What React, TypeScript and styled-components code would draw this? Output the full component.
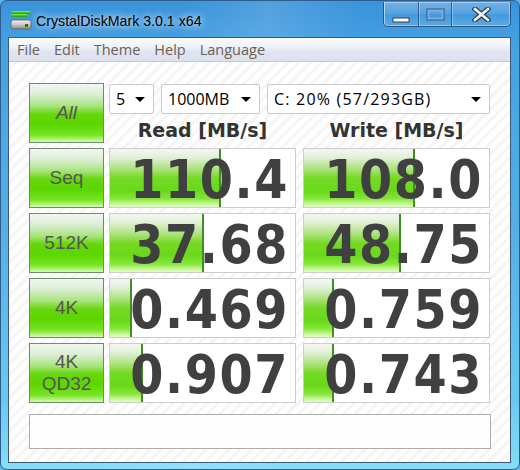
import React from 'react';
import styled, { createGlobalStyle } from 'styled-components';

const Global = createGlobalStyle`
  html, body { margin: 0; padding: 0; width: 520px; height: 470px; overflow: hidden; background: #5fb2e6; }
  #root { width: 520px; height: 470px; }
  * { box-sizing: border-box; }
`;

const Window = styled.div`
  width: 520px;
  height: 470px;
  display: flex;
  flex-direction: column;
  padding: 0 8px 6px 7px;
  border: 1px solid #2c5d8c;
  border-radius: 7px;
  background:
    linear-gradient(100deg, rgba(255,255,255,0) 30%, rgba(255,255,255,0.12) 45%, rgba(255,255,255,0) 60%),
    linear-gradient(180deg, #3a93da 0%, #47a1e2 10%, #56b0e6 50%, #6ac8f0 85%, #86def6 100%);
`;

const TitleBar = styled.div`
  height: 36px;
  display: flex;
  align-items: flex-start;
`;

const AppIcon = styled.svg`
  width: 22px;
  height: 20px;
  margin: 9px 0 0 2px;
  flex: none;
`;

const Title = styled.div`
  margin: 10px 0 0 4px;
  font-family: "Liberation Sans", Arial, sans-serif;
  font-size: 14.2px;
  line-height: 20px;
  color: #000;
  text-shadow: 0 0 6px rgba(255,255,255,0.9), 0 0 10px rgba(255,255,255,0.6);
  white-space: nowrap;
`;

const CaptionGroup = styled.div`
  margin-left: auto;
  margin-top: 1px;
  height: 25px;
  display: flex;
  border: 1px solid #2a5682;
  border-top: none;
  border-radius: 0 0 5px 5px;
  overflow: hidden;
  box-shadow: inset 0 0 0 1px rgba(255,255,255,0.35);
`;

const CaptionButton = styled.div<{ $w: number; $last?: boolean }>`
  width: ${p => p.$w}px;
  height: 100%;
  display: flex;
  align-items: center;
  justify-content: center;
  border-right: ${p => (p.$last ? 'none' : '1px solid rgba(34,72,112,0.75)')};
  background: linear-gradient(180deg, rgba(255,255,255,0.28) 0%, rgba(255,255,255,0.12) 48%, rgba(255,255,255,0.02) 52%, rgba(255,255,255,0.15) 100%);
  box-shadow: inset 1px 0 0 rgba(255,255,255,0.3);
`;

const MinGlyph = styled.svg`
  align-self: flex-end;
  margin-bottom: 3px;
`;

const Client = styled.div`
  flex: 1;
  display: flex;
  flex-direction: column;
  border: 1px solid #3a5b7c;
  background: repeating-linear-gradient(135deg, #ffffff 0px, #ffffff 5px, #f5f5f5 5px, #f5f5f5 8px);
`;

const MenuBar = styled.div`
  height: 24px;
  display: flex;
  align-items: center;
  padding-left: 1px;
  background: linear-gradient(180deg, #fdfdfe 0%, #eef1f8 40%, #e0e5f0 60%, #dbe1ee 100%);
  border-bottom: 1px solid #c0c8da;
`;

const MenuItem = styled.div`
  padding: 0 7px;
  font-family: "Open Sans", "Noto Sans", sans-serif;
  font-size: 14.5px;
  line-height: 22px;
  color: #6a6158;
`;

const Content = styled.div`
  display: flex;
  flex-direction: column;
  gap: 5px;
  padding: 21px 0 0 20px;
`;

const Row = styled.div`
  display: flex;
  gap: 5px;
  height: 60px;
`;

const TestButton = styled.div<{ $italic?: boolean }>`
  width: 75px;
  height: 60px;
  flex: none;
  display: flex;
  flex-direction: column;
  align-items: center;
  justify-content: center;
  border: 1px solid #6d8c6d;
  background: linear-gradient(180deg, #f3f7f2 0%, #dbeed4 18%, #a8e47c 38%, #66d60c 52%, #5cd600 70%, #78e424 88%, #b4f47e 96%, #d8fbb8 100%);
  font-family: "Liberation Sans", Arial, sans-serif;
  font-size: 19px;
  font-style: ${p => (p.$italic ? 'italic' : 'normal')};
  line-height: 22px;
  color: #555;
`;

const TopRight = styled.div`
  width: 381px;
  display: flex;
  flex-direction: column;
`;

const Combos = styled.div`
  margin-top: 1px;
  height: 30px;
  display: flex;
  gap: 7px;
`;

const Combo = styled.div<{ $w?: number; $spread?: boolean }>`
  ${p => (p.$w ? `width: ${p.$w}px; flex: none;` : 'flex: 1;')}
  height: 30px;
  display: flex;
  align-items: center;
  justify-content: space-between;
  padding: 0 8px 0 6px;
  background: #fff;
  border: 1px solid #c9c9c9;
  border-radius: 2px;
  font-family: "Open Sans", "Noto Sans", sans-serif;
  font-size: 16px;
  letter-spacing: ${p => (p.$spread ? '1.2px' : '0')};
  color: #000;
`;

const Arrow = styled.span`
  width: 0;
  height: 0;
  border-left: 5px solid transparent;
  border-right: 5px solid transparent;
  border-top: 5px solid #000;
  margin-top: 1px;
`;

const Headers = styled.div`
  flex: 1;
  display: flex;
  gap: 7px;
  align-items: center;
`;

const Header = styled.div`
  width: 187px;
  text-align: center;
  font-family: "DejaVu Sans", Verdana, sans-serif;
  font-weight: bold;
  font-size: 19px;
  color: #333;
  padding-top: 2px;
`;

const Pair = styled.div`
  display: flex;
  gap: 7px;
`;

const Cell = styled.div`
  position: relative;
  width: 187px;
  height: 60px;
  border: 1px solid #cdcdcd;
  background: #fff;
  display: flex;
  align-items: center;
  justify-content: flex-end;
  padding: 0 6px 0 0;
`;

const Bar = styled.div`
  position: absolute;
  left: 0;
  top: 0;
  bottom: 0;
  background: linear-gradient(180deg, #f4f7f2 0%, #e2f1da 14%, #aee27e 34%, #74da24 50%, #6ad81a 72%, #86e63a 86%, #c2f68e 94%, #e2fccc 100%);
  border-right: 2px solid #3f8f25;
`;

const Value = styled.div`
  position: relative;
  margin-top: 4px;
  font-family: "DejaVu Sans Condensed", "DejaVu Sans", sans-serif;
  font-weight: bold;
  font-size: 53px;
  line-height: 50px;
  letter-spacing: 1.6px;
  color: #404040;
  white-space: nowrap;
`;

const Status = styled.div`
  margin-top: 6px;
  width: 462px;
  height: 35px;
  border: 1px solid #adadad;
  background: #fdfdfd;
`;

type Result = { value: string; bar: number };
const rows: { label: React.ReactNode; read: Result; write: Result }[] = [
  { label: 'Seq', read: { value: '110.4', bar: 111 }, write: { value: '108.0', bar: 111 } },
  { label: '512K', read: { value: '37.68', bar: 94 }, write: { value: '48.75', bar: 97 } },
  { label: '4K', read: { value: '0.469', bar: 22 }, write: { value: '0.759', bar: 30 } },
  { label: <><span>4K</span><span>QD32</span></>, read: { value: '0.907', bar: 33 }, write: { value: '0.743', bar: 30 } },
];

const ResultCell = ({ r }: { r: Result }) => (
  <Cell>
    <Bar style={{ width: r.bar }} />
    <Value>{r.value}</Value>
  </Cell>
);

export default function App() {
  return (
    <>
      <Global />
      <Window>
        <TitleBar>
          <AppIcon viewBox="0 0 22 20">
            <defs>
              <linearGradient id="g1" x1="0" y1="0" x2="0" y2="1">
                <stop offset="0" stopColor="#9af05a" />
                <stop offset="0.5" stopColor="#3cc81e" />
                <stop offset="1" stopColor="#1e9a10" />
              </linearGradient>
              <linearGradient id="g2" x1="0" y1="0" x2="0" y2="1">
                <stop offset="0" stopColor="#f4f4f4" />
                <stop offset="0.5" stopColor="#c8c8c8" />
                <stop offset="1" stopColor="#8a8a8a" />
              </linearGradient>
            </defs>
            <rect x="1" y="1" width="20" height="3" rx="1" fill="url(#g1)" />
            <rect x="1" y="4" width="16" height="3" rx="1" fill="url(#g1)" />
            <rect x="1" y="10" width="20" height="9" rx="2.5" fill="url(#g2)" stroke="#5a5a5a" strokeWidth="0.8" />
            <rect x="15" y="14" width="3" height="3" fill="#1f7a18" />
          </AppIcon>
          <Title>CrystalDiskMark 3.0.1 x64</Title>
          <CaptionGroup>
            <CaptionButton $w={35}>
              <MinGlyph width="18" height="6" viewBox="0 0 18 6">
                <rect x="1" y="1" width="16" height="4" fill="#fff" stroke="#2b4057" strokeWidth="1" />
              </MinGlyph>
            </CaptionButton>
            <CaptionButton $w={33}>
              <svg width="19" height="13" viewBox="0 0 19 13">
                <rect x="1.5" y="1.5" width="16" height="10" fill="none" stroke="#3f6f9c" strokeWidth="3" opacity="0.7" />
                <rect x="2.5" y="2.5" width="14" height="8" fill="none" stroke="#9cc8ec" strokeWidth="1.4" opacity="0.7" />
              </svg>
            </CaptionButton>
            <CaptionButton $w={58} $last>
              <svg width="19" height="15" viewBox="0 0 19 15">
                <path d="M3 2 L16 13 M16 2 L3 13" stroke="#2b4057" strokeWidth="5" strokeLinecap="square" />
                <path d="M3 2 L16 13 M16 2 L3 13" stroke="#f4f4f4" strokeWidth="2.6" strokeLinecap="square" />
              </svg>
            </CaptionButton>
          </CaptionGroup>
        </TitleBar>
        <Client>
          <MenuBar>
            {['File', 'Edit', 'Theme', 'Help', 'Language'].map(m => (
              <MenuItem key={m}>{m}</MenuItem>
            ))}
          </MenuBar>
          <Content>
            <Row>
              <TestButton $italic>All</TestButton>
              <TopRight>
                <Combos>
                  <Combo $w={45}>5<Arrow /></Combo>
                  <Combo $w={99}>1000MB<Arrow /></Combo>
                  <Combo $spread>C: 20% (57/293GB)<Arrow /></Combo>
                </Combos>
                <Headers>
                  <Header>Read [MB/s]</Header>
                  <Header>Write [MB/s]</Header>
                </Headers>
              </TopRight>
            </Row>
            {rows.map((r, i) => (
              <Row key={i}>
                <TestButton>{r.label}</TestButton>
                <Pair>
                  <ResultCell r={r.read} />
                  <ResultCell r={r.write} />
                </Pair>
              </Row>
            ))}
            <Status />
          </Content>
        </Client>
      </Window>
    </>
  );
}
